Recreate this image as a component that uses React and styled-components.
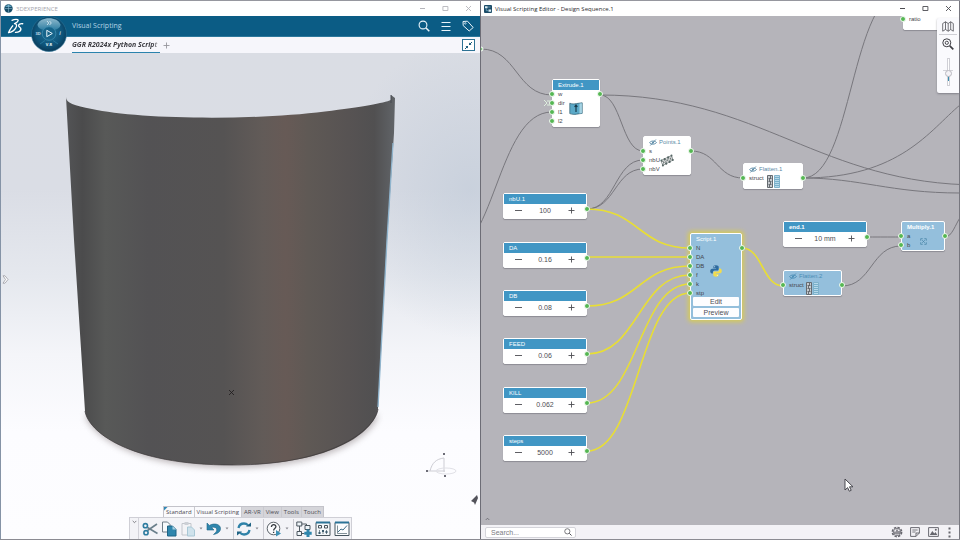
import React from "react";
import styled, { createGlobalStyle, css } from "styled-components";

const GlobalStyle = createGlobalStyle`
  *, *::before, *::after { box-sizing: border-box; }
  html, body, #root { height: 100%; }
  body {
    margin: 0;
    overflow: hidden;
    font-family: "Open Sans", "Noto Sans", sans-serif;
    font-size: 7px;
    color: #3c3c42;
  }
  button, input {
    font: inherit;
    color: inherit;
    margin: 0;
    padding: 0;
    border: 0;
    background: none;
  }
  button { display: inline-flex; align-items: center; justify-content: center; }
  h1 { margin: 0; font: inherit; }
  svg { display: block; flex: none; }
`;

const Desktop = styled.main`
  display: grid;
  grid-template-columns: 1fr 1fr;
  height: 100vh;
  border-top: 1px solid #96979f;
  border-bottom: 1px solid #8b8b92;
`;

const AppWindow = styled.section`
  display: flex;
  flex-direction: column;
  min-width: 0;
  min-height: 0;
  border-left: 1px solid ${(p) => p.$edge};
  border-right: ${(p) => (p.$right ? "1px solid #77777f" : "0")};
  background: #fff;
`;

const TitleBar = styled.header`
  display: flex;
  align-items: center;
  gap: 3px;
  flex: none;
  height: 15px;
  padding: 0 ${(p) => (p.$muted ? 4 : 3)}px 0 3px;
  background: #fff;
  font-size: 6px;
  line-height: 10px;
  color: ${(p) => (p.$muted ? "#a5a5ad" : "#2c2c30")};
`;

const WindowControls = styled.div`
  display: flex;
  gap: 7px;
  margin-left: auto;
  button { width: 16px; height: 12px; color: ${(p) => (p.$muted ? "#b5b5bb" : "#4d4d52")}; }
`;

const BrandBar = styled.div`
  position: relative;
  display: flex;
  align-items: center;
  flex: none;
  height: 21px;
  padding: 0 4px 0 6px;
  background: #0b5c85;
  color: #b4d4e4;
  border-bottom: 1px solid #2c789c;
  h1 { margin-left: 48px; font-size: 7px; line-height: 10px; }
`;

const Compass = styled.button`
  position: absolute;
  left: 30px;
  top: 0;
  z-index: 2;
`;

const BrandActions = styled.div`
  display: flex;
  gap: 6px;
  margin-left: auto;
  color: #e9f4fa;
  button { width: 16px; height: 16px; }
`;

const TabStrip = styled.nav`
  display: flex;
  align-items: center;
  flex: none;
  height: 16px;
  padding: 0 5px 0 71px;
  background: #f6f6fb;
`;

const DocumentTab = styled.button`
  width: 88px;
  height: 16px;
  justify-content: flex-start;
  overflow: hidden;
  white-space: nowrap;
  border-bottom: 1px solid #2a83ad;
  font-size: 7px;
  font-weight: 700;
  font-style: italic;
  span { width: 88px; overflow: hidden; text-align: left; mask-image: linear-gradient(90deg, #000 92%, transparent); }
`;

const AddTab = styled.button`
  width: 13px;
  height: 14px;
  color: #96969c;
`;

const FitButton = styled.button`
  width: 13px;
  height: 12px;
  margin-left: auto;
  border: 1px solid #2d7294;
  background: #fff;
`;

const Viewport = styled.div`
  position: relative;
  display: flex;
  flex-direction: column;
  justify-content: flex-end;
  align-items: center;
  flex: 1;
  min-height: 0;
  overflow: hidden;
  background:
    radial-gradient(ellipse 130px 150px at 98% 28%, rgba(190, 201, 215, 0.6), transparent),
    linear-gradient(#dadde4 0%, #dadde5 28%, #e5e8ee 46%, #f4f5f9 62%, #fcfcff 78%, #fdfdff 100%);
`;

const Scene = styled.svg`
  position: absolute;
  inset: 0;
  width: 100%;
  height: 100%;
`;

const PanelHandle = styled.button`
  position: absolute;
  left: 1px;
  top: 221px;
  width: 7px;
  height: 11px;
`;

const ActionBar = styled.div`
  position: relative;
`;

const SectionTabs = styled.div`
  display: flex;
  width: max-content;
  margin-left: 34px;
  border: 1px solid #c3c3ca;
  border-bottom: 0;
`;

const SectionTab = styled.button`
  height: 10px;
  padding: 0 2px;
  font-size: 6px;
  line-height: 9px;
  color: #4b4b52;
  background: ${(p) => (p.$open ? "#fafafd" : "#d5d5da")};
  border-right: 1px solid #c9c9cf;
  &:last-child { border-right: 0; }
  &:first-child { background: linear-gradient(135deg, #2f87b5 2px, #fafafd 3px); }
`;

const ToolRow = styled.div`
  display: flex;
  align-items: center;
  gap: 1px;
  height: 22px;
  background: #f3f3f7;
  border: 1px solid #cfcfd6;
  border-bottom: 0;
`;

const Collapse = styled.button`
  width: 9px;
  height: 21px;
  margin-right: 1px;
  padding-top: 2px;
  align-items: flex-start;
  border-right: 1px solid #d3d3da;
`;

const ToolButton = styled.button`
  width: ${(p) => (p.$drop ? 6 : 18)}px;
  height: 20px;
`;

const Divider = styled.span`
  width: 3px;
  height: 20px;
  border-right: 1px solid #cbcbd2;
`;

/* ---------- scripting canvas ---------- */

const Canvas = styled.div`
  position: relative;
  flex: 1;
  min-height: 0;
  overflow: hidden;
  background: #b5b4ba;
  font-family: "Liberation Sans", Arial, sans-serif;
`;

const Wires = styled.svg`
  position: absolute;
  inset: 0;
  width: 100%;
  height: 100%;
  fill: none;
`;

const Node = styled.article`
  position: absolute;
  left: ${(p) => p.$x}px;
  top: ${(p) => p.$y}px;
  width: ${(p) => p.$w}px;
  border: 1px solid #fff;
  border-radius: 2px;
  background: ${(p) => (p.$tinted ? "#94bfdc" : "#fff")};
  box-shadow: 0 1px 1px rgba(90, 90, 100, 0.45);
  ${(p) => p.$selected && css`box-shadow: 0 0 4px 2px #d6cb58;`}
`;

const NodeHeader = styled.header`
  display: flex;
  align-items: center;
  gap: 2px;
  height: 10px;
  padding: 0 5px;
  font-size: 6px;
  line-height: 10px;
  white-space: nowrap;
  color: ${(p) => (p.$hidden ? (p.$tinted ? "#4b8db5" : "#5b8aa6") : "#fff")};
  background: ${(p) => (p.$hidden || p.$tinted ? "transparent" : "#4196c4")};
  font-weight: ${(p) => (p.$bold ? 700 : 400)};
`;

const NodeBody = styled.div`
  display: grid;
  min-height: 14px;
  > * { grid-area: 1 / 1; }
  > svg { place-self: center; }
`;

const PortList = styled.ul`
  margin: 0;
  padding: 0;
  list-style: none;
`;

const PortRow = styled.li`
  position: relative;
  height: 9px;
  padding-left: 5px;
  font-size: 6px;
  line-height: 9px;
  color: #45454b;
`;

const Port = styled.i`
  position: absolute;
  ${(p) => (p.$out ? "right: -4px;" : "left: -4px;")}
  top: ${(p) => p.$top || 1}px;
  width: 6px;
  height: 6px;
  border: 1px solid #f1f8f1;
  border-radius: 50%;
  background: #55b752;
`;

const Stepper = styled.div`
  display: flex;
  align-items: center;
  height: 14px;
  padding: 0 7px 2px;
  color: #4d4d52;
  button { width: 15px; height: 12px; }
  input {
    flex: 1;
    min-width: 0;
    height: 12px;
    text-align: center;
    font-size: 7px;
    outline: 0;
  }
`;

const ScriptActions = styled.div`
  display: flex;
  flex-direction: column;
  gap: 2px;
  margin-top: -1px;
  padding: 0 2px 2px;
  button {
    height: 9px;
    border-radius: 1px;
    background: #fdfdff;
    font-size: 7px;
    line-height: 9px;
    color: #4d4d55;
  }
`;

const ViewPalette = styled.aside`
  position: absolute;
  top: 2px;
  right: 0;
  display: flex;
  flex-direction: column;
  align-items: center;
  width: 22px;
  height: 75px;
  border-radius: 2px 0 0 2px;
  background: #fafafd;
  box-shadow: 0 1px 2px rgba(80, 80, 90, 0.5);
  button { width: 18px; height: 17px; }
  button:first-child { border-bottom: 1px solid #cfcfd5; }
`;

const ZoomSlider = styled.input.attrs({ type: "range" })`
  appearance: none;
  writing-mode: vertical-lr;
  direction: rtl;
  width: 10px;
  height: 28px;
  margin-top: 6px;
  background: linear-gradient(#d3d3d9, #d3d3d9) center 12px / 10px 1px no-repeat;
  &::-webkit-slider-runnable-track {
    width: 3px;
    height: 28px;
    border: 1px solid #d0d0d6;
    background: linear-gradient(#fff 55%, #3a8eb0 55%, #3a8eb0 85%, #fff 85%);
  }
  &::-webkit-slider-thumb {
    appearance: none;
    width: 7px;
    height: 7px;
    margin-left: -3px;
    border: 1px solid #b9b9c0;
    border-radius: 50%;
    background: #f4f2f6;
  }
`;

const CanvasCaret = styled.button`
  position: absolute;
  left: 2px;
  bottom: 2px;
  width: 8px;
  height: 8px;
`;

const Pointer = styled.svg`
  position: absolute;
  left: 363px;
  top: 462px;
`;

const FooterBar = styled.footer`
  display: flex;
  align-items: center;
  gap: 4px;
  flex: none;
  height: 14px;
  padding: 0 5px 0 4px;
  background: #f3f2f6;
`;

const SearchBox = styled.label`
  display: flex;
  align-items: center;
  width: 91px;
  height: 11px;
  margin-right: auto;
  padding: 0 3px 0 5px;
  border: 1px solid #d4d4da;
  border-radius: 2px;
  background: #fff;
  input {
    flex: 1;
    min-width: 0;
    font: 7px "Liberation Sans", Arial, sans-serif;
    outline: 0;
  }
  input::placeholder { color: #7b7b82; opacity: 1; }
`;

const FooterButton = styled.button`
  width: ${(p) => (p.$slim ? 10 : 14)}px;
  height: 12px;
`;

/* ---------- icons ---------- */

const Minimise = () => (
  <svg width="7" height="7" viewBox="0 0 7 7" stroke="currentColor"><path d="M1 3.500h5" /></svg>
);
const Maximise = () => (
  <svg width="7" height="7" viewBox="0 0 7 7" fill="none" stroke="currentColor"><path d="M.9 1.500h5v4h-5z" strokeWidth=".9" /></svg>
);
const Close = () => (
  <svg width="7" height="7" viewBox="0 0 7 7" stroke="currentColor"><path d="M1 1l5 5M6 1L1 6" strokeWidth=".9" /></svg>
);
const Controls = ({ muted }) => (
  <WindowControls $muted={muted}>
    <button aria-label="Minimise"><Minimise /></button>
    <button aria-label="Maximise"><Maximise /></button>
    <button aria-label="Close"><Close /></button>
  </WindowControls>
);

const GlobeIcon = () => (
  <svg width="9" height="9" viewBox="0 0 9 9">
    <circle cx="4.500" cy="4.500" r="4.200" fill="#164c68" />
    <path d="M1 3a4 4 0 0 1 7 0z" fill="#5d9fbd" />
    <path d="M.6 4.500h7.800M4.500.5v8" stroke="#9cc6da" strokeWidth=".5" />
  </svg>
);
const EditorIcon = () => (
  <svg width="8" height="8" viewBox="0 0 8 8">
    <rect width="8" height="8" rx="1" fill="#1c4c68" />
    <path d="M1 1.200h2.600v2H1zM4.500 4.500h2.600v2.200H4.500z" fill="#d7e9f2" />
    <path d="M2.300 3.400v2.300h2M4 2h2.500" stroke="#7db4cf" strokeWidth=".7" fill="none" />
  </svg>
);
const DsLogo = () => (
  <svg width="17" height="17" viewBox="0 0 17 17" fill="none" stroke="#fff" strokeLinecap="round" strokeLinejoin="round">
    <path d="M5 2.300C7.500 1 11.300.9 11.200 2.500c-.1 1.400-2.200 2.300-3.700 3.100 2.300.3 2.700 2 1.300 4.300C7.400 12.200 4.500 14.200 1.500 14.700c1-2.600 2.600-4.600 4.200-6.900" strokeWidth="1.300" />
    <path d="M15.700 5.700c-2.200-.4-4.600.8-4 2.400.5 1.200 2.400 1.500 2.200 3-.2 1.700-2.500 3.200-5.400 3.300" strokeWidth="1.400" />
  </svg>
);
const CompassIcon = () => (
  <svg width="38" height="38" viewBox="0 0 38 38">
    <defs>
      <radialGradient id="disc" cx=".5" cy=".45" r=".55">
        <stop offset="0" stopColor="#21749a" />
        <stop offset=".7" stopColor="#0e547a" />
        <stop offset="1" stopColor="#0a3a58" />
      </radialGradient>
      <linearGradient id="lens" x1="0" x2="0" y1="0" y2="1">
        <stop offset="0" stopColor="#8fb9cd" />
        <stop offset="1" stopColor="#2f7fa3" />
      </linearGradient>
    </defs>
    <circle cx="18" cy="18" r="17.500" fill="url(#disc)" stroke="#2d7397" strokeWidth=".6" />
    <path d="M6.500 8.500C9 0 27 0 29.500 8.500c0 4-4.500 5-6 5.500a8 8 0 0 0-11 0C11 13.500 6.500 12.500 6.500 8.500z" fill="url(#lens)" />
    <path d="M9 28l5-3.500M27 28l-5-3.500" stroke="#2f83a8" strokeWidth=".7" />
    <circle cx="18" cy="17.500" r="6.800" fill="#16648a" stroke="#3d8db1" strokeWidth=".8" />
    <path d="M15.800 14.300l5.500 3.200-5.500 3.200z" fill="none" stroke="#e6f3f9" strokeWidth="1" />
    <path d="M16 5l1.800 2-1.800 2M18.500 5l1.800 2-1.800 2" fill="none" stroke="#e1f0f6" strokeWidth=".8" />
    <g fill="#c3dce8" fontFamily="Open Sans, sans-serif" fontWeight="700" fontSize="4" textAnchor="middle">
      <text x="7" y="19">3D</text>
      <text x="29" y="19" fontSize="5" fontStyle="italic">i</text>
      <text x="18" y="30" fill="#f0f8fb">V.R</text>
    </g>
  </svg>
);
const SearchIcon = ({ size = 12, color = "currentColor" }) => (
  <svg width={size} height={size} viewBox="0 0 12 12" fill="none" stroke={color}>
    <circle cx="5" cy="5" r="3.900" strokeWidth="1.100" />
    <path d="M8 8l3.300 3.300" strokeWidth="1.500" />
  </svg>
);
const MenuIcon = () => (
  <svg width="10" height="10" viewBox="0 0 10 10" stroke="currentColor"><path d="M.5 1.500h9M.5 5.500h9M.5 9.500h9" strokeWidth="1" /></svg>
);
const TagIcon = () => (
  <svg width="12" height="12" viewBox="0 0 12 12" fill="none" stroke="currentColor" strokeLinejoin="round">
    <path d="M1 1.500l4.500-.3 5.700 6.300-4 3.500L1.200 5.600z" strokeWidth="1" />
    <circle cx="3.300" cy="3.400" r=".8" strokeWidth=".7" />
  </svg>
);
const FitIcon = () => (
  <svg width="9" height="9" viewBox="0 0 9 9" fill="#175a7b" stroke="#175a7b" strokeWidth="1">
    <path d="M1 8l2-2M8 1L6 3" />
    <path d="M1.500 5h2.500v2.500zM5 1.500v2.500h2.500z" stroke="none" />
  </svg>
);
const PlusIcon = () => (
  <svg width="7" height="7" viewBox="0 0 7 7" stroke="currentColor"><path d="M3.500.5v6M.5 3.500h6" strokeWidth=".9" /></svg>
);
const MinusIcon = () => (
  <svg width="7" height="7" viewBox="0 0 7 7" stroke="currentColor"><path d="M0 3.500h7" strokeWidth=".9" /></svg>
);
const DropIcon = () => (
  <svg width="4" height="3" viewBox="0 0 4 3"><path d="M.5.5h3L2 2.500z" fill="#8a8a92" /></svg>
);
const CutIcon = () => (
  <svg width="16" height="16" viewBox="0 0 16 16" fill="none">
    <path d="M15 3L5.500 9.500M15.500 12.500L5.500 6.500" stroke="#6a7f8b" strokeWidth="1.600" />
    <circle cx="3.400" cy="4.700" r="2.100" stroke="#2d7ca0" strokeWidth="1.600" />
    <circle cx="4" cy="11.700" r="2.100" stroke="#2d7ca0" strokeWidth="1.600" />
  </svg>
);
const CopyIcon = () => (
  <svg width="16" height="16" viewBox="0 0 16 16">
    <path d="M1.500 1h5l2.500 2.500V11H1.500z" fill="#f7fafc" stroke="#6f7d87" />
    <path d="M6.500 5h5L15 8.500V15H6.500z" fill="#2f86ad" stroke="#1e6486" />
    <path d="M11.500 5v3.500H15" fill="#a9d2e4" />
  </svg>
);
const PasteIcon = () => (
  <svg width="16" height="16" viewBox="0 0 16 16">
    <path d="M2 2.500h9V14H2z" fill="#f3f3f6" stroke="#c3c6cc" />
    <path d="M4.500 1h4v3h-4z" fill="#cdd0d6" />
    <path d="M7.500 6h4l3 3v6h-7z" fill="#cfe2ec" stroke="#a9c8d6" />
  </svg>
);
const UndoIcon = () => (
  <svg width="16" height="16" viewBox="0 0 16 16">
    <path d="M1 2v7h7L5.600 6.600C8 5.500 11 6.500 10.800 9c-.1 1.700-1.500 2.900-3.300 4.500 4-.8 7-2.500 7-6C14.500 3.400 8.500 1.500 3.400 4.400z" fill="#2f86ad" stroke="#1e6486" strokeWidth=".6" />
  </svg>
);
const UpdateIcon = () => (
  <svg width="16" height="16" viewBox="0 0 16 16" fill="none" stroke="#2f82a8" strokeWidth="2.300">
    <path d="M2.500 7A5.600 5.600 0 0 1 8 2.500a5.600 5.600 0 0 1 4 1.700M13.500 9A5.600 5.600 0 0 1 8 13.500a5.600 5.600 0 0 1-4-1.700" />
    <path d="M10 5.500h5v-4zM6 10.500H1v4z" fill="#1f6384" stroke="none" />
  </svg>
);
const HelpIcon = () => (
  <svg width="16" height="16" viewBox="0 0 16 16">
    <circle cx="7.500" cy="7.500" r="6.300" fill="#fbfbfd" stroke="#5c6369" strokeWidth="1" />
    <path d="M5.400 6c0-3.200 4.700-3 4.500-.2C9.800 7.500 7.600 7.600 7.600 9.500M7.600 10.700v1.400" fill="none" stroke="#33393e" strokeWidth="1.300" />
    <path d="M10 9l5 3.500-5 3z" fill="#3e90b4" />
  </svg>
);
const GraphIcon = () => (
  <svg width="16" height="16" viewBox="0 0 16 16">
    <path d="M3.500 5v7.500h5M5 3h5.500v5" fill="none" stroke="#505a62" />
    <path d="M.8 1h5v4h-5zM9 4.500h5v4H9zM1 10.500h4.500v4H1z" fill="#eef4f8" stroke="#4a555e" />
    <path d="M10.500 8.500h3v2.200h2.200v3h-2.200V16h-3v-2.300H8.300v-3h2.200z" fill="#2f86ad" />
  </svg>
);
const PanelIcon = () => (
  <svg width="16" height="16" viewBox="0 0 16 16">
    <path d="M1 1.500h14v13H1z" fill="#f3f7fa" stroke="#4a565e" />
    <path d="M1 1.500h14" stroke="#2a7397" strokeWidth="2" />
    <path d="M3.500 4.500h3v2.500h-3zM9.500 4.500h3v2.500h-3z" fill="none" stroke="#47525a" />
    <path d="M4.500 9v4M8 9v4M11.500 9v4" fill="none" stroke="#7b868d" />
    <path d="M3.500 11h2v2h-2zM7 9h2v2H7zM10.500 10h2v2h-2z" fill="#3d5c6e" />
  </svg>
);
const ChartIcon = () => (
  <svg width="16" height="16" viewBox="0 0 16 16" fill="none">
    <path d="M1 1.500h14v13H1z" fill="#fbfcfd" stroke="#45545e" />
    <path d="M1 1.500h14" stroke="#2a7397" strokeWidth="2" />
    <path d="M3.500 4.500v8h9.500" stroke="#667680" strokeWidth=".8" />
    <path d="M4 11l3-3 2 1 4-4.500" stroke="#41708a" />
  </svg>
);
const EyeOff = () => (
  <svg width="8" height="7" viewBox="0 0 8 7" fill="none" stroke="currentColor">
    <path d="M.5 3.700C2 1.500 5.800 1.500 7.500 3.500 6 5.700 2 5.700.5 3.700zM6.900.5L1.300 6.500" strokeWidth=".9" />
    <circle cx="4" cy="3.500" r="1" fill="currentColor" stroke="none" />
  </svg>
);
const ExtrudeArt = () => (
  <svg width="14" height="13" viewBox="0 0 14 13">
    <path d="M.8 1.200C3 2.200 5 2 7.500 1.600S11.500 1 13.200.8v10.600c-2 .2-3.500.4-5.700.8S3 12.400.8 11.600z" fill="#5ba9c8" stroke="#2c5b70" strokeWidth=".7" />
    <path d="M10.500 1.400v10l2.400-.2V1.200z" fill="#a6d3e3" />
    <path d="M7 10V3.200M5.600 4.800L7 3l1.400 1.800" fill="none" stroke="#173b4c" strokeWidth="1.200" />
  </svg>
);
const PointsArt = () => (
  <svg width="14" height="13" viewBox="0 0 14 13" fill="none" stroke="#465253">
    <path d="M1 6.500l10.500-5 1.500 4.500L2.800 11.500zM4.500 4.900l1.700 4.900M8 3.200l1.700 4.700" strokeWidth=".6" />
    <path d="M1 6.500l5.200 3.300M4.500 4.900l5.200 3M8 3.200l5 2.800M2.800 11.500l1.700-6.600M6.200 9.800L8 3.200M9.700 7.900l1.800-6.400" strokeWidth=".6" />
    <g fill="#566765" stroke="none">
      <circle cx="1.500" cy="6.500" r="1" /><circle cx="4.600" cy="5" r="1" /><circle cx="8.100" cy="3.200" r="1" /><circle cx="11.500" cy="1.600" r="1" />
      <circle cx="2.900" cy="11.400" r="1" /><circle cx="6.300" cy="9.700" r="1" /><circle cx="9.700" cy="7.900" r="1" /><circle cx="12.800" cy="6.100" r="1" />
    </g>
  </svg>
);
const FlattenArt = () => (
  <svg width="13" height="13" viewBox="0 0 13 13">
    <path d="M.5.5h5v12h-5z" fill="#c6cace" stroke="#656b70" />
    <path d="M1.500 3.500h3M1.500 6.500h3M1.500 9.500h3M3.500 1v2.500M2.500 4v2M3.500 7v2M2.500 10v2" stroke="#50575d" strokeWidth=".8" />
    <path d="M7.500.5h5v12h-5z" fill="#b6d9ea" stroke="#7fb2cb" />
    <path d="M8 2.500h4M8 4.500h4M8 6.500h4M8 8.500h4M8 10.500h4" stroke="#5e9dbb" strokeWidth=".7" />
  </svg>
);
const MultiplyArt = () => (
  <svg width="7" height="7" viewBox="0 0 7 7" fill="none" stroke="#4a86a8">
    <path d="M.7 2.700v-2h2M4.300.7h2v2M6.300 4.300v2h-2M2.700 6.300h-2v-2M2.200 2.200l2.600 2.600M4.800 2.200L2.200 4.800" strokeWidth=".8" />
  </svg>
);
const PythonArt = () => (
  <svg width="12" height="12" viewBox="0 0 12 12">
    <path d="M5.900.3C3.600.3 3.400 1.300 3.400 2v1.200h2.700v.5H2.200C1 3.700.2 4.600.2 6.100s.7 2.400 1.700 2.400h1V7.200c0-1 .8-1.800 1.700-1.800h2.700c.8 0 1.400-.7 1.400-1.500V2C8.700 1 7.800.3 5.900.3z" fill="#2f6c9f" />
    <path d="M6.100 11.700c2.300 0 2.500-1 2.500-1.700V8.800H5.900v-.5h3.900c1.200 0 2-.9 2-2.400s-.7-2.400-1.700-2.400h-1v1.300c0 1-.8 1.800-1.700 1.800H4.700c-.8 0-1.400.7-1.400 1.500V10c0 1 .9 1.700 2.800 1.700z" fill="#f2dc4d" />
    <circle cx="4.700" cy="1.800" r=".5" fill="#fff" /><circle cx="7.300" cy="10.200" r=".5" fill="#fff" />
  </svg>
);
const MapIcon = () => (
  <svg width="12" height="11" viewBox="0 0 12 11" fill="none" stroke="#4f4f56">
    <path d="M.7 2.500L3.500.8v7.700L.7 10.200zM3.500.8L6.200 2.500v7.700L3.500 8.500M6.200 2.500L8.700.8v7.700l-2.500 1.700M8.700.8l2.600 1.700v7.700L8.700 8.500" strokeWidth=".8" />
  </svg>
);
const ZoomIcon = () => (
  <svg width="12" height="12" viewBox="0 0 12 12" fill="none" stroke="#3d3d43">
    <circle cx="4.800" cy="4.800" r="4" strokeWidth="1" />
    <circle cx="4.800" cy="4.800" r="1.600" strokeWidth=".9" />
    <path d="M7.800 7.800l3.500 3.500" strokeWidth="1.700" />
  </svg>
);
const GearIcon = () => (
  <svg width="12" height="12" viewBox="0 0 12 12" fill="none" stroke="#66666d">
    <circle cx="6" cy="6" r="4.600" strokeWidth="1.600" strokeDasharray="2.400 1.200" />
    <circle cx="6" cy="6" r="3.600" strokeWidth=".8" />
    <path d="M4 8V5.500M6 8.500V3.500M8 8V5" strokeWidth="1.400" />
  </svg>
);
const NoteIcon = () => (
  <svg width="10" height="10" viewBox="0 0 10 10" fill="none" stroke="#6c6c73">
    <path d="M.6.6h8.800v5.400L6 9.400H.6zM9.400 6H6v3.400" strokeWidth="1" />
    <path d="M2.300 3h5.400M2.300 5h3.400" strokeWidth=".9" />
  </svg>
);
const ImageIcon = () => (
  <svg width="11" height="10" viewBox="0 0 11 10">
    <path d="M.6.6h9.800v8.800H.6z" fill="none" stroke="#6c6c73" />
    <path d="M1.800 8l2.500-4 2 2.500L7.500 5l1.800 3z" fill="#66666d" /><circle cx="7.800" cy="2.800" r="1" fill="#66666d" />
  </svg>
);
const MoreIcon = () => (
  <svg width="3" height="11" viewBox="0 0 3 11" fill="#66666d">
    <path d="M.5.5h2v2h-2zM.5 4.500h2v2h-2zM.5 8.500h2v2h-2z" />
  </svg>
);

/* ---------- 3D model ---------- */

const SHELL =
  "M66 44C66 50 74 52.500 92 56C136 66 250 68 325 58.500C362 54 384 50 391 47V42L395 45L394 80L387 187L378 356C376 374 342 412 232 412C128 412 88 378 85 358L74 187Z";

const Model = () => (
  <Scene viewBox="1 0 479 486" preserveAspectRatio="xMidYMin meet" aria-label="Half cylinder model">
    <defs>
      <linearGradient id="shell" gradientUnits="userSpaceOnUse" x1="66" x2="394" y1="0" y2="0">
        <stop offset="0" stopColor="#535456" />
        <stop offset=".05" stopColor="#4b4b4c" />
        <stop offset=".12" stopColor="#585958" />
        <stop offset=".25" stopColor="#535254" />
        <stop offset=".48" stopColor="#555353" />
        <stop offset=".6" stopColor="#625b58" />
        <stop offset=".67" stopColor="#675a56" />
        <stop offset=".74" stopColor="#5f5955" />
        <stop offset=".86" stopColor="#575353" />
        <stop offset=".94" stopColor="#515051" />
        <stop offset="1" stopColor="#606367" />
      </linearGradient>
      <filter id="soft"><feGaussianBlur stdDeviation="3" /></filter>
    </defs>
    <path d="M85 362C90 382 134 415 232 415S374 382 378 362z" fill="#827779" opacity=".5" filter="url(#soft)" />
    <path d={SHELL} fill="url(#shell)" />
    <path d="M85 358C88 378 128 412 232 412S376 374 378 356" fill="none" stroke="#3f3a3c" strokeWidth="1" opacity=".7" />
    <path d="M393 90L387 187L378 354" fill="none" stroke="#8fb4cd" strokeWidth="1.300" />
    <path d="M391 42V50" fill="none" stroke="#474a50" strokeWidth="1" />
    <path d="M229 337l5 5M234 337l-5 5" stroke="#1d1b1c" strokeWidth=".8" />
    <g fill="none" stroke="#cdcdd4" strokeWidth="1">
      <path d="M430 418c2-8 6-12 14-13v14M427 418h18" />
      <ellipse cx="446" cy="418" rx="10" ry="3" stroke="#e1e1e7" />
    </g>
    <path d="M426 417h2v2h-2zM443 400h2v2h-2zM444 422h2v2h-2z" fill="#6c6c76" />
    <path d="M477 442l-6 6 3 1.500 1 2.500 3-7z" fill="#53535b" />
  </Scene>
);

/* ---------- canvas data ---------- */

const PARAMETERS = [
  { name: "nbU.1", value: "100", x: 22, y: 177 },
  { name: "DA", value: "0.16", x: 22, y: 226 },
  { name: "DB", value: "0.08", x: 22, y: 274 },
  { name: "FEED", value: "0.06", x: 22, y: 322 },
  { name: "KILL", value: "0.062", x: 22, y: 371 },
  { name: "steps", value: "5000", x: 22, y: 419 },
  { name: "end.1", value: "10 mm", x: 302, y: 205 },
];

const NODES = [
  { name: "Extrude.1", x: 71, y: 63, w: 48, inputs: ["w", "dir", "l1", "l2"], art: <ExtrudeArt /> },
  { name: "Points.1", x: 162, y: 120, w: 48, inputs: ["s", "nbU", "nbV"], art: <PointsArt />, hidden: true },
  { name: "Flatten.1", x: 262, y: 147, w: 60, inputs: ["struct"], art: <FlattenArt />, hidden: true },
  {
    name: "Script.1", x: 209, y: 217, w: 52, inputs: ["N", "DA", "DB", "f", "k", "stp"],
    art: <PythonArt />, tinted: true, selected: true, actions: ["Edit", "Preview"],
  },
  { name: "Flatten.2", x: 302, y: 254, w: 59, inputs: ["struct"], art: <FlattenArt />, hidden: true, tinted: true },
  { name: "Multiply.1", x: 420, y: 205, w: 44, inputs: ["a", "b"], art: <MultiplyArt />, tinted: true, bold: true },
  { name: "", x: 422, y: -12, w: 80, inputs: ["ratio"], hidden: true },
];

const link = (x1, y1, x2, y2) => {
  const m = (x1 + x2) / 2;
  return `M${x1} ${y1}C${m} ${y1} ${m} ${y2} ${x2} ${y2}`;
};

const GREY_WIRES = [
  link(0, 33, 71, 79),
  link(-41, 244, 71, 96),
  link(119, 79, 162, 135),
  link(106, 193, 162, 144),
  link(106, 193, 162, 153),
  link(210, 135, 262, 162),
  link(386, 221, 420, 221),
  link(361, 270, 420, 230),
  "M119 79C279 79 339 169 499 169",
  "M322 162C372 162 369 -26 424 -26",
  "M322 162C419 162 449 114 479 89",
  "M322 162C379 162 409 177 479 177",
  "M464 221C471 221 474 209 480 200",
];

const YELLOW_WIRES = [
  link(106, 193, 209, 232),
  link(106, 241, 209, 241),
  link(106, 290, 209, 250),
  link(106, 338, 209, 259),
  link(106, 387, 209, 268),
  link(106, 435, 209, 277),
  link(261, 232, 302, 270),
];

const ParameterNode = ({ name, value, x, y }) => (
  <Node $x={x} $y={y} $w={84}>
    <NodeHeader $bold={name === "end.1"}>{name}</NodeHeader>
    <Stepper>
      <button aria-label={`Decrease ${name}`}><MinusIcon /></button>
      <input aria-label={name} defaultValue={value} />
      <button aria-label={`Increase ${name}`}><PlusIcon /></button>
    </Stepper>
    <Port $out $top={12} />
  </Node>
);

const OperatorNode = ({ node }) => (
  <Node $x={node.x} $y={node.y} $w={node.w} $tinted={node.tinted} $selected={node.selected}>
    <NodeHeader $hidden={node.hidden} $tinted={node.tinted} $bold={node.bold}>
      {node.hidden && node.name && <EyeOff />}
      {node.name}
    </NodeHeader>
    <NodeBody>
      <PortList>
        {node.inputs.map((port) => (
          <PortRow key={port}><Port />{port}</PortRow>
        ))}
      </PortList>
      {node.art}
    </NodeBody>
    {node.actions && (
      <ScriptActions>
        {node.actions.map((a) => <button key={a}>{a}</button>)}
      </ScriptActions>
    )}
    <Port $out $top={11} />
  </Node>
);

const TOOLS = [
  ["Cut", CutIcon], ["Copy", CopyIcon], ["Paste", PasteIcon, "drop"],
  ["Undo", UndoIcon, "drop", "end"], ["Update", UpdateIcon, "drop", "end"],
  ["Help", HelpIcon, "drop", "end"], ["Add node", GraphIcon],
  ["Script panel", PanelIcon], ["Chart", ChartIcon],
];

const SECTIONS = ["Standard", "Visual Scripting", "AR-VR", "View", "Tools", "Touch"];

export default function App() {
  return (
    <>
      <GlobalStyle />
      <Desktop>
        <AppWindow $edge="#8593a6">
          <TitleBar $muted><GlobeIcon />3DEXPERIENCE<Controls muted /></TitleBar>
          <BrandBar>
            <DsLogo />
            <Compass aria-label="Compass"><CompassIcon /></Compass>
            <h1>Visual Scripting</h1>
            <BrandActions>
              <button aria-label="Search"><SearchIcon /></button>
              <button aria-label="Menu"><MenuIcon /></button>
              <button aria-label="Tags"><TagIcon /></button>
            </BrandActions>
          </BrandBar>
          <TabStrip>
            <DocumentTab><span>GGR R2024x Python Script</span></DocumentTab>
            <AddTab aria-label="Add tab"><PlusIcon /></AddTab>
            <FitButton aria-label="Exit full screen"><FitIcon /></FitButton>
          </TabStrip>
          <Viewport>
            <Model />
            <PanelHandle aria-label="Open panel">
              <svg width="7" height="9" viewBox="0 0 7 9" fill="#fff" stroke="#9a9aa2" strokeWidth=".8"><path d="M1 .8h2l3 3.700-3 3.700H1l2.500-3.700z" /></svg>
            </PanelHandle>
            <ActionBar>
              <SectionTabs>
                {SECTIONS.map((s, i) => <SectionTab key={s} $open={i < 2}>{s}</SectionTab>)}
              </SectionTabs>
              <ToolRow>
                <Collapse aria-label="Collapse">
                  <svg width="5" height="4" viewBox="0 0 5 4" fill="none" stroke="#66666d"><path d="M.7.9L2.500 2.700 4.300.9" strokeWidth=".8" /></svg>
                </Collapse>
                {TOOLS.map(([name, Icon, drop, end]) => (
                  <React.Fragment key={name}>
                    <ToolButton aria-label={name}><Icon /></ToolButton>
                    {drop && <ToolButton $drop aria-label={`${name} options`}><DropIcon /></ToolButton>}
                    {end && <Divider />}
                  </React.Fragment>
                ))}
              </ToolRow>
            </ActionBar>
          </Viewport>
        </AppWindow>

        <AppWindow $edge="#6d6d76" $right>
          <TitleBar><EditorIcon />Visual Scripting Editor - Design Sequence.1<Controls /></TitleBar>
          <Canvas>
            <Wires>
              <g stroke="#78777d" strokeWidth="1">{GREY_WIRES.map((d) => <path key={d} d={d} />)}</g>
              <g stroke="#e8de35" strokeWidth="1.600">{YELLOW_WIRES.map((d) => <path key={d} d={d} />)}</g>
              <circle cx="0" cy="33" r="2" fill="#7fc47c" stroke="#fff" />
              <path d="M63 84l3 3-3 3M66 85h3M66 89h3" stroke="#dff0df" strokeWidth="1" />
            </Wires>
            {PARAMETERS.map((p) => <ParameterNode key={p.name} {...p} />)}
            {NODES.map((n) => <OperatorNode key={n.x + n.name} node={n} />)}
            <ViewPalette>
              <button aria-label="Map"><MapIcon /></button>
              <button aria-label="Fit zoom"><ZoomIcon /></button>
              <ZoomSlider aria-label="Zoom" defaultValue={42} />
            </ViewPalette>
            <CanvasCaret aria-label="Expand">
              <svg width="5" height="4" viewBox="0 0 5 4" fill="none" stroke="#66666d"><path d="M.7 3l1.800-1.800L4.300 3" strokeWidth=".8" /></svg>
            </CanvasCaret>
            <Pointer width="10" height="14" viewBox="0 0 10 14">
              <path d="M1 1v11l2.600-2.400 1.700 3.600 1.900-.9-1.700-3.500H9z" fill="#fff" stroke="#3b3b42" strokeWidth=".9" />
            </Pointer>
          </Canvas>
          <FooterBar>
            <SearchBox>
              <input type="search" aria-label="Search" placeholder="Search..." />
              <SearchIcon size={8} color="#4d4d54" />
            </SearchBox>
            <FooterButton aria-label="Settings"><GearIcon /></FooterButton>
            <FooterButton aria-label="Notes"><NoteIcon /></FooterButton>
            <FooterButton aria-label="Capture"><ImageIcon /></FooterButton>
            <FooterButton $slim aria-label="More"><MoreIcon /></FooterButton>
          </FooterBar>
        </AppWindow>
      </Desktop>
    </>
  );
}
